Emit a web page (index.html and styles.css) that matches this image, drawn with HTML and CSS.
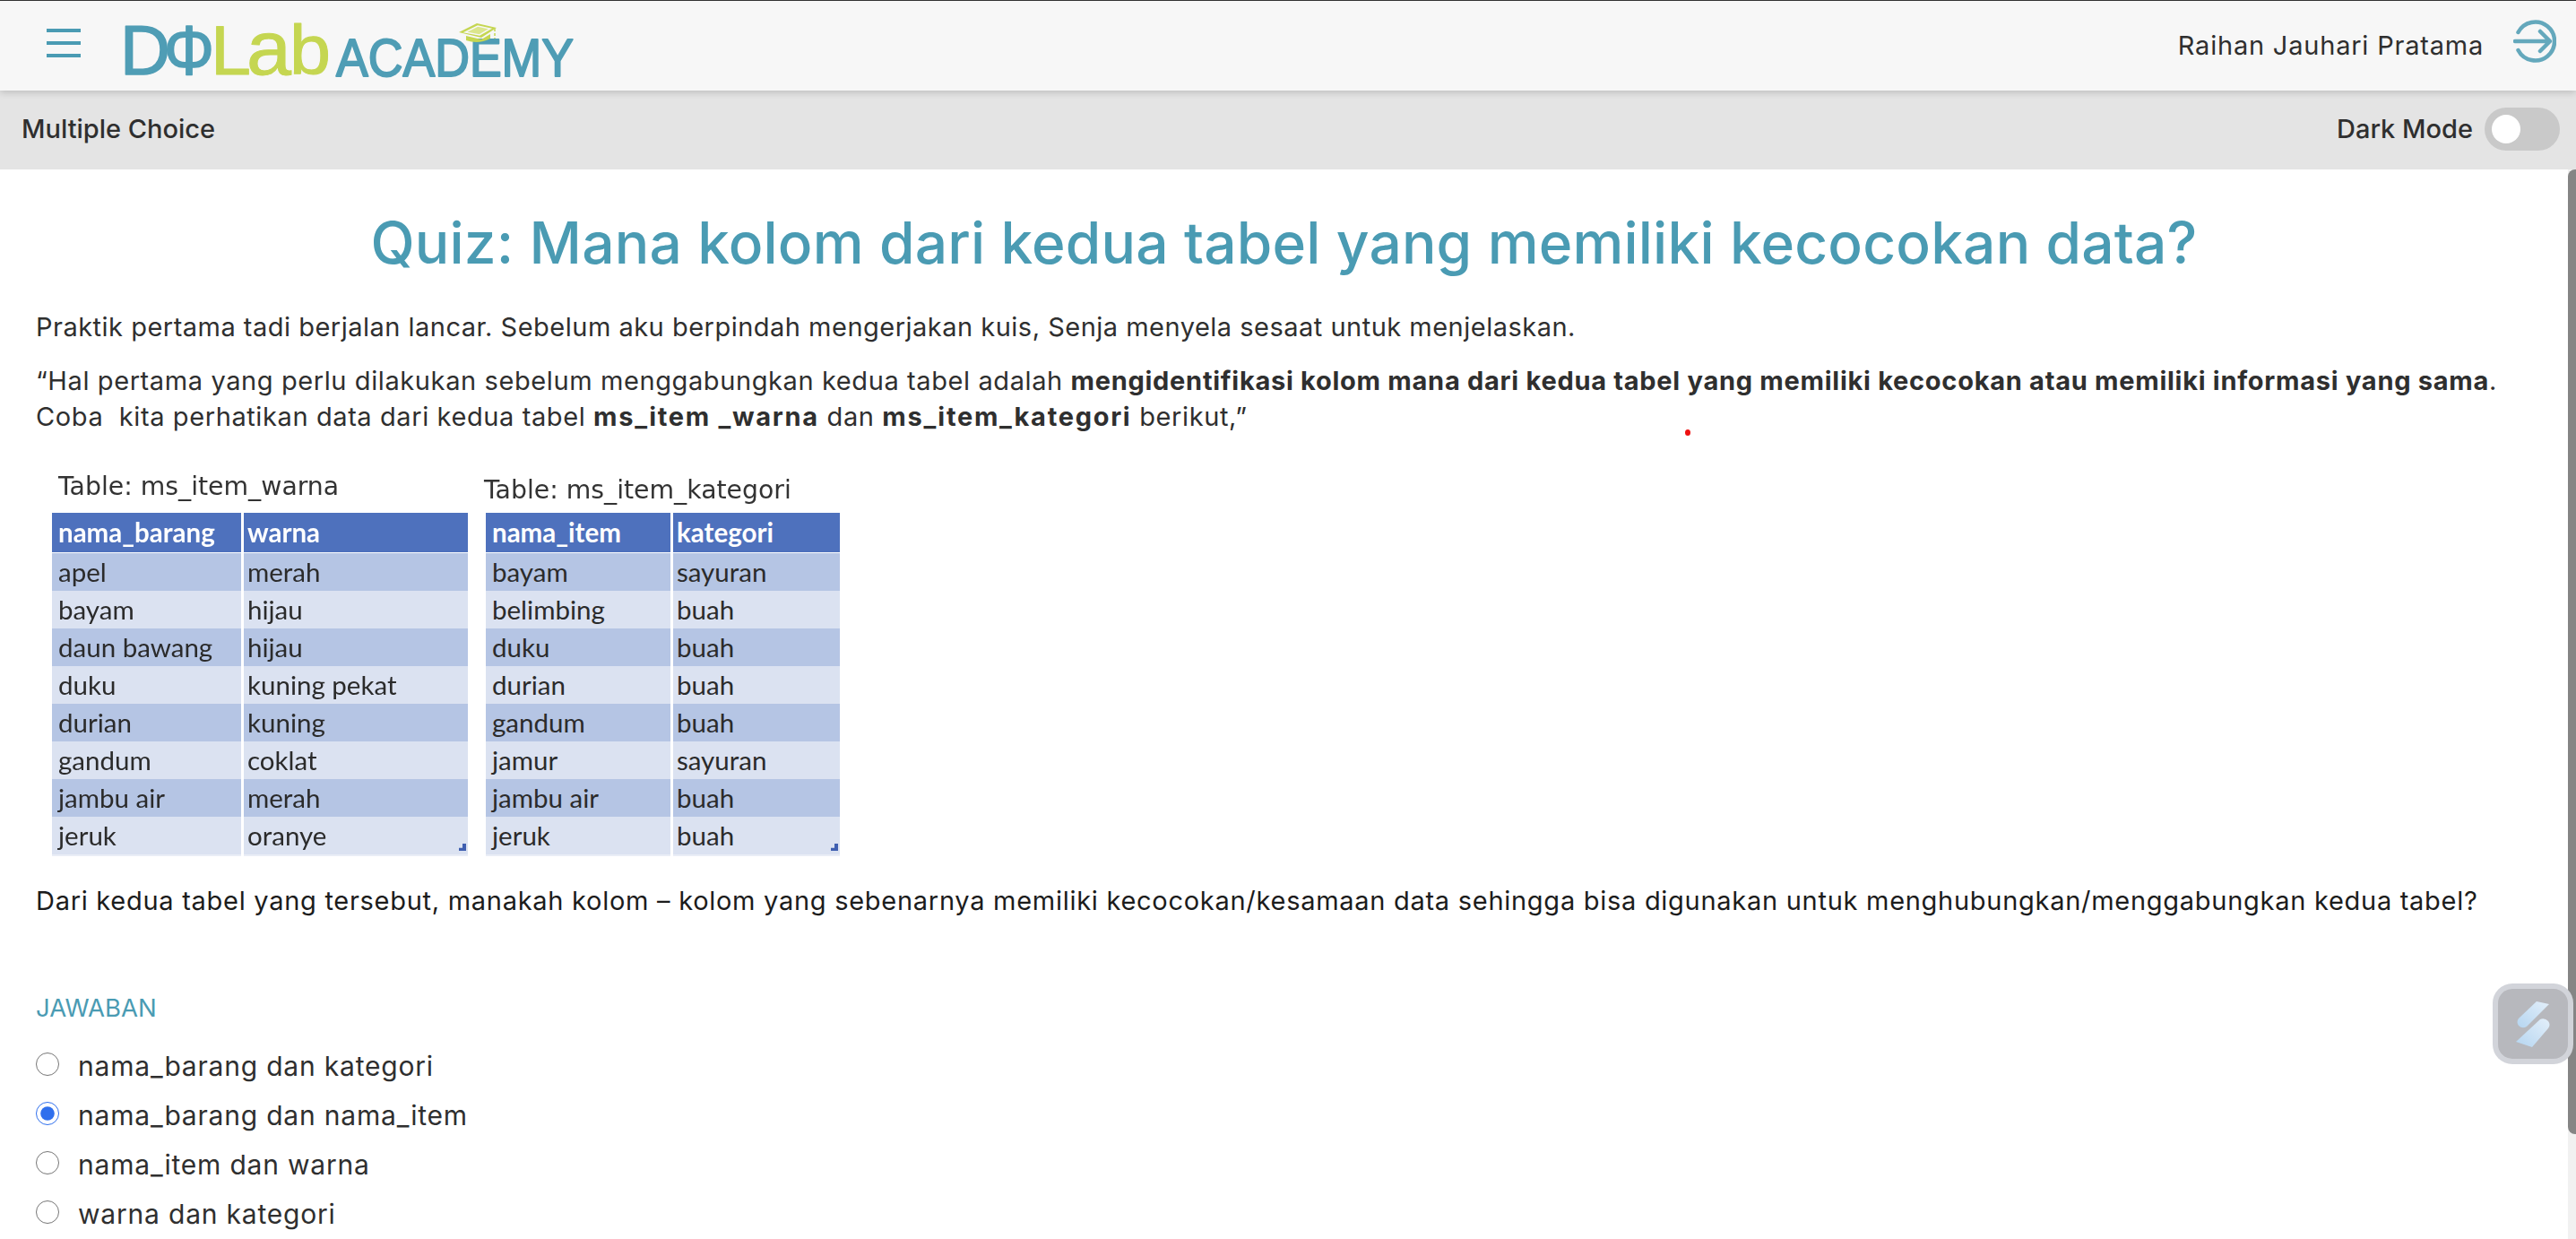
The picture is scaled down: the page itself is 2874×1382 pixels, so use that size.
FILE: index.html
```html
<!DOCTYPE html>
<html lang="en">

<head>
    <meta charset="UTF-8">
    <title>Quiz - DQLab Academy</title>
    <link rel="stylesheet" href="styles.css">
</head>

<body>
    <header class="topbar">
        <button class="burger" aria-label="Menu"><span></span><span></span><span></span></button>
        <svg class="logo" width="520" height="80" viewBox="0 0 520 80">
            <text class="logo-blue" x="4" y="72" textLength="56" lengthAdjust="spacingAndGlyphs">D</text>
            <text class="logo-blue" x="53" y="72" textLength="56" lengthAdjust="spacingAndGlyphs">Φ</text>
            <text class="logo-lime" x="105" y="72" textLength="45" lengthAdjust="spacingAndGlyphs">L</text>
            <text class="logo-lime logo-a" x="145" y="72" textLength="50" lengthAdjust="spacingAndGlyphs">a</text>
            <text class="logo-lime logo-b" x="193" y="72" textLength="46" lengthAdjust="spacingAndGlyphs">b</text>
            <text class="logo-academy" x="245" y="74" textLength="265" lengthAdjust="spacingAndGlyphs">ACADEMY</text>
            <path d="M382 25L402 15L424 20L407 31Z" fill="#c5d651"/>
            <path d="M389 25L403 18L417 21L405 28Z" fill="#dbe68c" stroke="#f7f7f7" stroke-width="1.5"/>
            <path d="M390 29L407 33L417 27V32Q404 39 390 34Z" fill="#c5d651"/>
            <path d="M422 21V32" stroke="#c5d651" stroke-width="1.5" stroke-dasharray="3 2"/>
        </svg>
        <div class="user">
            <span class="user-name">Raihan Jauhari Pratama</span>
            <svg class="logout" width="48" height="48" viewBox="0 0 48 48" fill="none" stroke="#64a8bc" stroke-width="4.5" stroke-linecap="round" stroke-linejoin="round">
                <path d="M5.5 14A21.5 21.5 0 1 1 5.5 34"/>
                <path d="M2 24H40M30 13L41 24L30 35"/>
            </svg>
        </div>
    </header>

    <div class="subbar">
        <span>Multiple Choice</span>
        <div class="dark-toggle">
            <span>Dark Mode</span>
            <span class="switch"><span class="knob"></span></span>
        </div>
    </div>

    <main class="content">
        <h1>Quiz: Mana kolom dari kedua tabel yang memiliki kecocokan data?</h1>
        <p class="para-first">Praktik pertama tadi berjalan lancar. Sebelum aku berpindah mengerjakan kuis, Senja menyela sesaat untuk menjelaskan.</p>
        <p class="para-second">“Hal pertama yang perlu dilakukan sebelum menggabungkan kedua tabel adalah <b>mengidentifikasi kolom mana dari kedua tabel yang memiliki kecocokan atau memiliki informasi yang sama</b>. Coba&nbsp; kita perhatikan data dari kedua tabel <b class="term">ms_item _warna</b> dan <b class="term">ms_item_kategori</b> berikut,”</p>

        <div class="tables">
            <div class="tbl tbl-warna">
                <div class="tbl-title">Table: ms_item_warna</div>
                <div class="tbl-grid">
                    <div class="row head"><span>nama_barang</span><span>warna</span></div>
                    <div class="row dark"><span>apel</span><span>merah</span></div>
                    <div class="row"><span>bayam</span><span>hijau</span></div>
                    <div class="row dark"><span>daun bawang</span><span>hijau</span></div>
                    <div class="row"><span>duku</span><span>kuning pekat</span></div>
                    <div class="row dark"><span>durian</span><span>kuning</span></div>
                    <div class="row"><span>gandum</span><span>coklat</span></div>
                    <div class="row dark"><span>jambu air</span><span>merah</span></div>
                    <div class="row"><span>jeruk</span><span>oranye</span></div>
                    <i class="corner"></i>
                </div>
            </div>
            <div class="tbl tbl-kategori">
                <div class="tbl-title">Table: ms_item_kategori</div>
                <div class="tbl-grid">
                    <div class="row head"><span>nama_item</span><span>kategori</span></div>
                    <div class="row dark"><span>bayam</span><span>sayuran</span></div>
                    <div class="row"><span>belimbing</span><span>buah</span></div>
                    <div class="row dark"><span>duku</span><span>buah</span></div>
                    <div class="row"><span>durian</span><span>buah</span></div>
                    <div class="row dark"><span>gandum</span><span>buah</span></div>
                    <div class="row"><span>jamur</span><span>sayuran</span></div>
                    <div class="row dark"><span>jambu air</span><span>buah</span></div>
                    <div class="row"><span>jeruk</span><span>buah</span></div>
                    <i class="corner"></i>
                </div>
            </div>
        </div>

        <p class="question">Dari kedua tabel yang tersebut, manakah kolom – kolom yang sebenarnya memiliki kecocokan/kesamaan data sehingga bisa digunakan untuk menghubungkan/menggabungkan kedua tabel?</p>

        <div class="answer-label">JAWABAN</div>
        <label class="choice"><input type="radio" name="jawaban"><span>nama_barang dan kategori</span></label>
        <label class="choice"><input type="radio" name="jawaban" checked><span>nama_barang dan nama_item</span></label>
        <label class="choice"><input type="radio" name="jawaban"><span>nama_item dan warna</span></label>
        <label class="choice"><input type="radio" name="jawaban"><span>warna dan kategori</span></label>
    </main>

    <i class="red-dot"></i>

    <div class="scrollbar"><div class="scroll-thumb"></div></div>

    <div class="float-btn">
        <svg width="38" height="51" viewBox="0 0 38 51">
            <defs>
                <linearGradient id="bolt" x1="0" y1="1" x2="1" y2="0">
                    <stop offset="0" stop-color="#b5d5f0"/>
                    <stop offset="1" stop-color="#e3effa"/>
                </linearGradient>
            </defs>
            <path d="M23 0L37 3L12 28Q7 31 3 27Q0 23 3 19Z" fill="url(#bolt)"/>
            <path d="M0 45L27 20Q32 18 36 22Q39 26 36 30L18 51Z" fill="url(#bolt)"/>
        </svg>
    </div>
</body>

</html>
```

FILE: styles.css
```css
:root {
    --teal: #4a9bb3;
    --text: #2f2f2f;
}

* {
    box-sizing: border-box;
}

html,
body {
    height: 100%;
}

body {
    margin: 0;
    overflow: hidden;
    background: #fff;
    color: var(--text);
    font-family: Inter, "Liberation Sans", sans-serif;
    font-size: 29px;
}

.topbar {
    height: 101px;
    display: flex;
    align-items: center;
    background: #f7f7f7;
    border-top: 1px solid #333;
    box-shadow: 0 2px 8px rgba(0, 0, 0, 0.18);
    position: relative;
    padding-right: 22px;
}

.burger {
    width: 38px;
    display: flex;
    flex-direction: column;
    gap: 10px;
    margin: 0 0 6px 52px;
    padding: 0;
    border: none;
    background: none;
}

.burger span {
    display: block;
    height: 4px;
    background: var(--teal);
}

.logo {
    margin-left: 40px;
    overflow: visible;
}

.logo text {
    font-family: "Liberation Sans", sans-serif;
    stroke-linejoin: round;
}

.logo-blue {
    font-size: 78px;
    fill: #4f9db5;
    stroke: #4f9db5;
    stroke-width: 1.5px;
}

.logo-lime {
    font-size: 78px;
    fill: #c5d651;
    stroke: #c5d651;
    stroke-width: 1px;
}

.logo-a {
    font-size: 86px;
}

.logo-b {
    font-size: 78px;
}

.logo-academy {
    font-size: 60px;
    fill: #4f9db5;
    stroke: #4f9db5;
    stroke-width: 2px;
}

.user {
    margin-left: auto;
    display: flex;
    align-items: center;
    gap: 33px;
}

.user-name {
    letter-spacing: 0.79px;
    margin-bottom: 2px;
}

.logout {
    margin-bottom: 10px;
}

.subbar {
    height: 88px;
    display: flex;
    align-items: center;
    justify-content: space-between;
    padding: 0 18px 3px 24px;
    background: #e4e4e4;
    font-weight: 500;
}

.dark-toggle {
    display: flex;
    align-items: center;
    gap: 13px;
}

.switch {
    width: 84px;
    height: 48px;
    padding: 8px;
    border-radius: 24px;
    background: #c9c9c9;
}

.knob {
    display: block;
    width: 32px;
    height: 32px;
    border-radius: 50%;
    background: #fff;
}

.content {
    padding: 0 49px 0 40px;
}

h1 {
    margin: 45px 0 37px;
    text-align: center;
    font-size: 64px;
    line-height: 74px;
    font-weight: 500;
    letter-spacing: 0.18px;
    color: var(--teal);
}

p {
    margin: 0;
    line-height: 40px;
}

.para-first {
    margin-bottom: 20px;
    letter-spacing: 0.49px;
}

.para-second {
    letter-spacing: 0.6px;
}

.para-second b {
    font-weight: 700;
    letter-spacing: 0.72px;
}

.para-second .term {
    letter-spacing: 1.7px;
}

.tables {
    display: flex;
    align-items: flex-end;
    gap: 20px;
    margin: 41px 0 32px 18px;
    filter: blur(0.5px);
}

.tbl-title {
    font: 28.3px/34px "DejaVu Sans", sans-serif;
    margin: 0 0 12px 7px;
    color: #333;
}

.tbl-kategori .tbl-title {
    margin: 0 0 8px -2px;
}

.tbl-grid {
    position: relative;
    font-family: Lato, sans-serif;
    font-size: 29.5px;
    color: #2b2b2b;
}

.tbl-warna .tbl-grid {
    width: 464px;
}

.tbl-kategori .tbl-grid {
    width: 395px;
}

.row {
    display: grid;
    gap: 3px;
    height: 42px;
    background: #fff;
}

.tbl-warna .row {
    grid-template-columns: 211px 1fr;
}

.tbl-kategori .row {
    grid-template-columns: 206px 1fr;
}

.row span {
    padding-left: 7px;
    line-height: 42px;
    background: #dbe2f1;
    border-bottom: 2px solid #e9edf6;
}

.row span + span {
    padding-left: 4px;
}

.row.dark span {
    background: #b5c5e4;
}

.row.head {
    height: 45px;
}

.row.head span {
    background: #4e71bd;
    color: #fff;
    font-weight: 700;
    border-bottom: 4px solid #fff;
    line-height: 44px;
}

.corner {
    position: absolute;
    right: 2px;
    bottom: 4px;
    width: 8px;
    height: 8px;
    background: #3f5fb0;
    clip-path: polygon(100% 0, 100% 100%, 0 100%, 0 60%, 50% 60%, 50% 0);
}

.question {
    margin-bottom: 82px;
    letter-spacing: 0.72px;
    color: #1c1c1c;
}

.answer-label {
    font-size: 27.5px;
    color: var(--teal);
    margin-bottom: 22px;
}

.choice {
    display: flex;
    align-items: center;
    height: 55px;
    font-size: 30px;
    letter-spacing: 0.8px;
}

.choice span {
    margin-bottom: 4px;
}

.choice input {
    width: 26px;
    height: 26px;
    margin: 0 21px 8px 0;
    accent-color: #2f6fed;
}

.red-dot {
    position: absolute;
    left: 1880px;
    top: 479px;
    width: 6px;
    height: 7px;
    border-radius: 50%;
    background: #e11;
}

.scrollbar {
    position: absolute;
    right: 0;
    top: 189px;
    bottom: 0;
    width: 9px;
    background: #f1f1f1;
}

.scroll-thumb {
    height: 1076px;
    background: #858585;
    border-radius: 8px 0 0 8px;
}

.float-btn {
    position: absolute;
    left: 2781px;
    top: 1097px;
    width: 90px;
    height: 90px;
    display: flex;
    align-items: center;
    justify-content: center;
    border: 6px solid rgba(214, 216, 222, 0.9);
    border-radius: 22px;
    background: rgba(170, 172, 178, 0.85);
}
```
